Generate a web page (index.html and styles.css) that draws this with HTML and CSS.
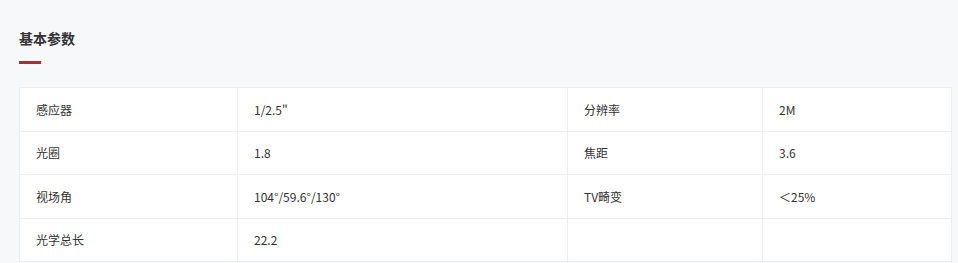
FILE: index.html
```html
<!DOCTYPE html>
<html lang="zh-CN">
<head>
<meta charset="utf-8">
<link rel="stylesheet" href="styles.css">
</head>
<body>
<div class="page">
  <h2 class="title">基本参数</h2>
  <div class="title-bar"></div>
  <table class="params">
    <colgroup>
      <col class="c1"><col class="c2"><col class="c3"><col class="c4">
    </colgroup>
    <tr><td>感应器</td><td>1/2.5"</td><td>分辨率</td><td>2M</td></tr>
    <tr><td>光圈</td><td>1.8</td><td>焦距</td><td>3.6</td></tr>
    <tr><td>视场角</td><td>104°/59.6°/130°</td><td>TV畸变</td><td>＜25%</td></tr>
    <tr><td>光学总长</td><td>22.2</td><td></td><td></td></tr>
  </table>
</div>
</body>
</html>
```

FILE: styles.css
```css
html, body {
  margin: 0;
  padding: 0;
  background: #f7f8fa;
}
body {
  font-family: "Noto Sans CJK SC", "Microsoft YaHei", sans-serif;
  color: #333;
}
.page {
  padding: 28px 7px 0 19px;
}
.title {
  margin: 0;
  font-size: 14px;
  line-height: 21px;
  font-weight: bold;
  color: #333;
}
.title-bar {
  width: 22px;
  height: 3px;
  background: #b8282a;
  margin-top: 12px;
}
.params {
  margin-top: 23px;
  width: 932px;
  border-collapse: collapse;
  table-layout: fixed;
  background: #fff;
}
.params .c1 { width: 218px; }
.params .c2 { width: 330px; }
.params .c3 { width: 195px; }
.params .c4 { width: 189px; }
.params td {
  border: 1px solid #edeef1;
  height: 43.5px;
  padding: 0 16px;
  box-sizing: border-box;
  font-size: 12px;
  color: #333;
  vertical-align: middle;
}
```
